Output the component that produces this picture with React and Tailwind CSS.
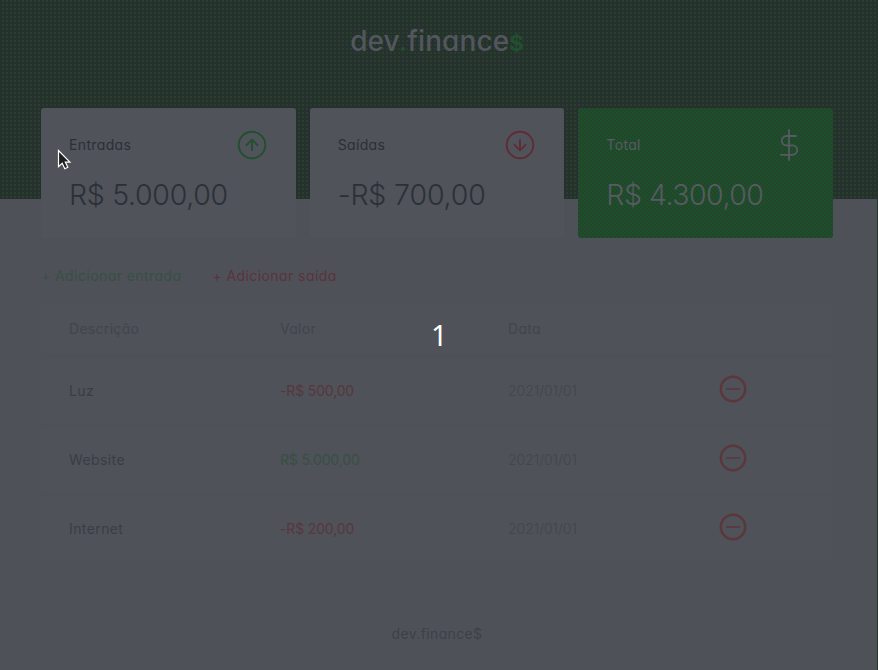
import React from "react";

const cards = [
  { label: "Entradas", value: "R$ 5.000,00", kind: "up" },
  { label: "Saídas", value: "-R$ 700,00", kind: "down" },
  { label: "Total", value: "R$ 4.300,00", kind: "total" },
];

const rows = [
  { name: "Luz", value: "-R$ 500,00", income: false },
  { name: "Website", value: "R$ 5.000,00", income: true },
  { name: "Internet", value: "-R$ 200,00", income: false },
];

const tracking = {
  up: "tracking-[-0.3px]",
  down: "tracking-[-0.15px]",
  total: "tracking-[-0.5px]",
};

function CardIcon({ kind }) {
  if (kind === "total") {
    return (
      <svg width="32" height="32" viewBox="0 0 32 32" fill="none" stroke="#575b62" strokeWidth="1.8" strokeLinecap="round">
        <path d="M16 1v30M23 7h-9.5a4.7 4.7 0 0 0 0 9.4h6a4.7 4.7 0 0 1 0 9.4H8" />
      </svg>
    );
  }
  const up = kind === "up";
  return (
    <svg width="32" height="32" viewBox="0 0 32 32" fill="none" stroke={up ? "#20502f" : "#5f2c36"} strokeWidth="1.9" strokeLinecap="round" strokeLinejoin="round">
      <circle cx="16" cy="16" r="13.3" />
      <path d={up ? "M16 21V11M10.5 16.2L16 10.7l5.5 5.5" : "M16 11v10M10.5 15.8l5.5 5.5 5.5-5.5"} />
    </svg>
  );
}

function Card({ label, value, kind }) {
  const total = kind === "total";
  return (
    <div className={"h-[130px] flex-1 rounded-[3px] pl-7 pr-7 pt-[21px] " + (total ? "bg-[#204a2b] bg-[image:repeating-conic-gradient(#1d5029_0_25%,#23442d_0_50%)] bg-[size:4px_4px] text-[#575b62]" : "bg-[#505359] text-[#2b3038]")}>
      <div className="flex h-8 items-center justify-between">
        <span className="text-sm leading-5 tracking-[0.35px]">{label}</span>
        <CardIcon kind={kind} />
      </div>
      <div className={"mt-[14px] whitespace-nowrap text-[28.5px] leading-10 font-[350] " + tracking[kind]}>{value}</div>
    </div>
  );
}

export default function App() {
  return (
    <div className="relative h-[670px] w-[878px] overflow-hidden border-r border-[#26362f] bg-[#4f5159] font-[Inter,'Open_Sans',sans-serif] [font-feature-settings:'cv11']">
      <header className="h-[199px] bg-[#26302f] bg-[image:conic-gradient(#26402a_25%,transparent_0)] bg-[size:4px_4px] bg-[position:0_0] pt-[21px] pr-[3px] text-center [background-image:linear-gradient(#26302f_3px,transparent_3px),linear-gradient(90deg,#25402a_1px,transparent_1px)]">
        <h1 className="text-[28px] leading-10 font-medium tracking-[0.1px] text-[#53565d]">
          dev<span className="text-[#20502f]">.</span>finance<span className="text-[22px] font-bold text-[#20502f]">$</span>
        </h1>
      </header>
      <main className="-mt-[91px] ml-[41px] w-[792px]">
        <section className="flex gap-[14px]">
          {cards.map((c) => <Card key={c.label} {...c} />)}
        </section>
        <div className="mt-7 flex gap-[31px] text-sm leading-5 tracking-[0.42px]">
          <span className="text-[#365042]">+ Adicionar entrada</span>
          <span className="text-[#5b333a]">+ Adicionar saída</span>
        </div>
        <section className="mt-[17px] flex flex-col gap-[5px] text-sm leading-5">
          <div className="grid h-[51px] grid-cols-[211px_228px_211px_1fr] items-center rounded-[2px] bg-[#4f5259] pl-7 tracking-[0.3px] text-[#41454c]">
            <span>Descrição</span><span>Valor</span><span>Data</span>
          </div>
          {rows.map((r) => (
            <div key={r.name} className="grid h-16 grid-cols-[211px_228px_211px_1fr] items-center rounded-[2px] bg-[#4f5259] pl-7 text-[#393e45]">
              <span className="tracking-[0.4px]">{r.name}</span>
              <span className={"tracking-[-0.15px] " + (r.income ? "text-[#365042]" : "text-[#57373c]")}>{r.value}</span>
              <span className="font-light tracking-[-0.05px] text-[#42464c]">2021/01/01</span>
              <svg className="-mt-1" width="28" height="28" viewBox="0 0 28 28" fill="none" stroke="#5b373c">
                <circle cx="14" cy="14" r="12.2" strokeWidth="2.4" />
                <path d="M7 14h14" strokeWidth="1.6" />
              </svg>
            </div>
          ))}
        </section>
      </main>
      <footer className="mt-[63px] pr-[3px] text-center text-sm leading-5 tracking-[0.35px] text-[#3d4148]">dev.finance$</footer>
      <div className="absolute left-[431px] top-[315px] font-['Noto_Sans'] text-[29px] leading-10 text-white">1</div>
      <svg className="absolute left-[57px] top-[149px]" width="15" height="22" viewBox="0 0 15 22" fill="#1d1f22" stroke="#fff" strokeWidth="1.2">
        <path d="M1.5 1.5v16.2l3.7-3.4 2.6 5.4 3-1.4-2.5-5.2h4.6z" />
      </svg>
    </div>
  );
}
